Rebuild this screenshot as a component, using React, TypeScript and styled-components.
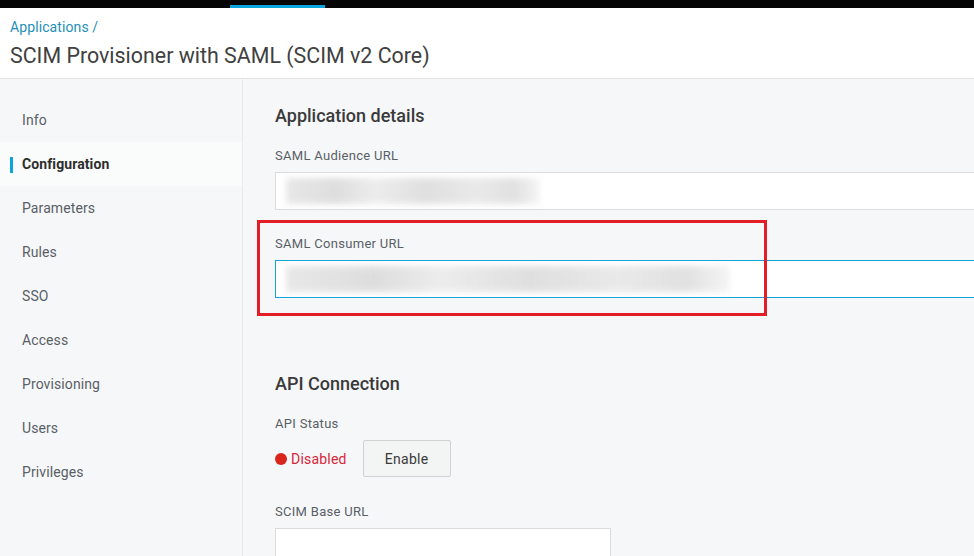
import * as React from 'react';
import styled, { createGlobalStyle } from 'styled-components';

const GlobalStyle = createGlobalStyle`
    html, body {
        margin: 0;
        padding: 0;
        overflow: hidden;
        background: #f6f7f9;
        font-family: Roboto, 'Liberation Sans', sans-serif;
    }
    * { box-sizing: border-box; }
`;

const TopBar = styled.div`
    height: 8px;
    background: #050505;
    padding: 5px 0 0 230px;
`;

const TopBarTab = styled.div`
    width: 95px;
    height: 3px;
    background: #0aa5dc;
`;

const Header = styled.header`
    height: 71px;
    background: #ffffff;
    border-bottom: 1px solid #e4e4e4;
    padding: 9px 10px 0;
`;

const Breadcrumb = styled.a`
    display: block;
    color: #1f8fb8;
    font-size: 14px;
    line-height: 20px;
    letter-spacing: 0.1px;
`;

const Title = styled.h1`
    margin: 4px 0 0;
    font-size: 21.4px;
    font-weight: 400;
    line-height: 30px;
    color: #404040;
`;

const Layout = styled.div`
    display: flex;
    height: 477px;
`;

const Sidebar = styled.nav`
    width: 243px;
    flex-shrink: 0;
    background: #f6f7f9;
    border-right: 1px solid #e8e9eb;
    padding-top: 19px;
`;

const NavItem = styled.div<{ active?: boolean }>`
    position: relative;
    height: 44px;
    display: flex;
    align-items: center;
    padding-left: 22px;
    font-size: 14px;
    letter-spacing: 0.1px;
    color: ${p => (p.active ? '#2e2e2e' : '#5a5f66')};
    font-weight: ${p => (p.active ? 700 : 400)};
    background: ${p => (p.active ? '#fafbfb' : 'transparent')};
    &::before {
        content: '';
        display: ${p => (p.active ? 'block' : 'none')};
        position: absolute;
        left: 10px;
        top: 15px;
        width: 3px;
        height: 16px;
        background: #0aa5dc;
    }
`;

const Main = styled.main`
    flex: 1;
    padding: 25px 0 0 32px;
    overflow: hidden;
`;

const SectionTitle = styled.h2<{ spaced?: boolean }>`
    margin: ${p => (p.spaced ? '74px' : '0')} 0 0;
    font-size: 18px;
    font-weight: 500;
    line-height: 24px;
    color: #3a3a3a;
`;

const Field = styled.div<{ gap?: number }>`
    position: relative;
    margin-top: ${p => p.gap ?? 20}px;
`;

const Label = styled.div<{ below?: number }>`
    font-size: 13px;
    line-height: 16px;
    letter-spacing: 0.3px;
    color: #5a5f66;
    margin-bottom: ${p => p.below ?? 8}px;
`;

const Input = styled.div<{ focused?: boolean; width?: number }>`
    width: ${p => (p.width ? `${p.width}px` : '760px')};
    height: 38px;
    background: #ffffff;
    border: 1px solid ${p => (p.focused ? '#11a3d8' : '#dcdcdc')};
    padding: 5px 10px;
`;

const Blur = styled.div<{ w: number }>`
    width: ${p => p.w}px;
    height: 26px;
    filter: blur(3px);
    background:
        linear-gradient(90deg, #e4e4e4 0%, #d8d8d8 20%, #eaeaea 35%, #dadada 55%, #e6e6e6 75%, #dcdcdc 90%, #f4f4f4 100%);
    opacity: 0.85;
`;

const Highlight = styled.div`
    position: absolute;
    left: -18px;
    top: -16px;
    width: 510px;
    height: 96px;
    border: 3px solid #e41e26;
    pointer-events: none;
`;

const StatusRow = styled.div`
    display: flex;
    align-items: center;
    gap: 16px;
`;

const Status = styled.span`
    display: flex;
    align-items: center;
    gap: 4px;
    color: #d8263a;
    font-size: 14px;
    letter-spacing: 0.2px;
`;

const Dot = styled.span`
    width: 12px;
    height: 12px;
    border-radius: 50%;
    background: #d9261c;
`;

const Button = styled.button`
    width: 88px;
    height: 37px;
    background: #f3f4f4;
    border: 1px solid #cfd1d2;
    border-radius: 2px;
    font-family: inherit;
    font-size: 14px;
    letter-spacing: 0.3px;
    color: #3a3a3a;
`;

const navItems = ['Info', 'Configuration', 'Parameters', 'Rules', 'SSO', 'Access', 'Provisioning', 'Users', 'Privileges'];

const App: React.FC = () => {
    return (
        <>
            <GlobalStyle />
            <TopBar>
                <TopBarTab />
            </TopBar>
            <Header>
                <Breadcrumb>Applications /</Breadcrumb>
                <Title>SCIM Provisioner with SAML (SCIM v2 Core)</Title>
            </Header>
            <Layout>
                <Sidebar>
                    {navItems.map(item => (
                        <NavItem key={item} active={item === 'Configuration'}>
                            {item}
                        </NavItem>
                    ))}
                </Sidebar>
                <Main>
                    <SectionTitle>Application details</SectionTitle>
                    <Field>
                        <Label>SAML Audience URL</Label>
                        <Input>
                            <Blur w={254} />
                        </Input>
                    </Field>
                    <Field gap={26}>
                        <Highlight />
                        <Label>SAML Consumer URL</Label>
                        <Input focused>
                            <Blur w={444} />
                        </Input>
                    </Field>
                    <SectionTitle spaced>API Connection</SectionTitle>
                    <Field gap={20}>
                        <Label below={8}>API Status</Label>
                        <StatusRow>
                            <Status>
                                <Dot />
                                Disabled
                            </Status>
                            <Button>Enable</Button>
                        </StatusRow>
                    </Field>
                    <Field gap={27}>
                        <Label below={8}>SCIM Base URL</Label>
                        <Input width={336} />
                    </Field>
                </Main>
            </Layout>
        </>
    );
};

export default App;
